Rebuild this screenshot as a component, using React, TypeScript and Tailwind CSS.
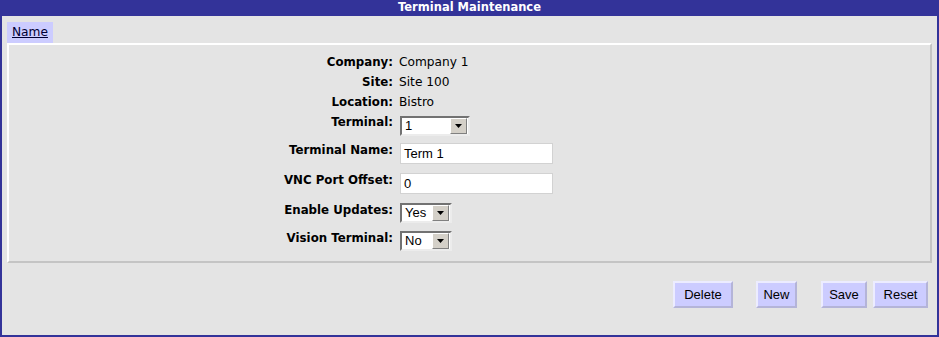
const rows = [
  { label: "Company:", value: "Company 1" },
  { label: "Site:", value: "Site 100" },
  { label: "Location:", value: "Bistro" },
];

function DropArrow() {
  return (
    <div className="ml-auto mr-px flex h-[16px] w-[17px] items-center justify-center border border-t-white border-l-white border-r-[#808080] border-b-[#808080] bg-[#d4d0c8]">
      <svg width="7" height="4" viewBox="0 0 7 4">
        <path d="M0 0h7L3.5 4z" fill="#000" />
      </svg>
    </div>
  );
}

function FakeSelect({ value, className }: { value: string; className: string }) {
  return (
    <div
      className={`${className} flex h-[20px] items-center border-2 border-t-[#727272] border-l-[#727272] border-r-[#ececec] border-b-[#ececec] bg-white pl-[3px] font-['Liberation_Sans',Arial,sans-serif] text-[13px] text-black`}>
      <span>{value}</span>
      <DropArrow />
    </div>
  );
}

function TextBox({ value }: { value: string }) {
  return (
    <div className="flex h-[21px] w-[153px] items-center border border-[#d2d2d2] bg-white pl-[3px] font-['Liberation_Sans',Arial,sans-serif] text-[13px] text-black">
      {value}
    </div>
  );
}

function Label({ children }: { children: string }) {
  return (
    <div className="w-[384px] shrink-0 text-right text-[11.8px] leading-[20px] font-bold text-black">
      {children}
    </div>
  );
}

export default function App() {
  return (
    <div className="h-[337px] w-[939px] border-2 border-[#333399] bg-[#e4e4e4] font-['DejaVu_Sans',Verdana,sans-serif]">
      <div className="-mt-[2px] flex h-[16px] items-center justify-center bg-[#333399] text-[11.5px] font-bold text-white">
        Terminal Maintenance
      </div>

      <div className="px-[5px] pt-[6px]">
        <div className="flex">
          <div className="flex h-[21px] items-center bg-[#ccccff] px-[5px] text-[12.2px] text-[#000033] underline">
            Name
          </div>
        </div>

        <div className="border-2 border-t-white border-l-white border-r-[#c4c4c4] border-b-[#c4c4c4] pt-[7px] pb-[5px]">
          {rows.map((row) => (
            <div key={row.label} className="flex h-[20px]">
              <Label>{row.label}</Label>
              <div className="ml-[6px] text-[12.2px] leading-[20px] text-black">{row.value}</div>
            </div>
          ))}

          <div className="flex h-[28px]">
            <Label>Terminal:</Label>
            <div className="ml-[7px] mt-[4px]">
              <FakeSelect value="1" className="w-[70px]" />
            </div>
          </div>

          <div className="flex h-[30px]">
            <Label>Terminal Name:</Label>
            <div className="ml-[7px] mt-[3px]">
              <TextBox value="Term 1" />
            </div>
          </div>

          <div className="flex h-[30px]">
            <Label>VNC Port Offset:</Label>
            <div className="ml-[7px] mt-[3px]">
              <TextBox value="0" />
            </div>
          </div>

          <div className="flex h-[28px]">
            <Label>Enable Updates:</Label>
            <div className="ml-[7px] mt-[3px]">
              <FakeSelect value="Yes" className="w-[52px]" />
            </div>
          </div>

          <div className="flex h-[28px]">
            <Label>Vision Terminal:</Label>
            <div className="ml-[7px] mt-[3px]">
              <FakeSelect value="No" className="w-[52px]" />
            </div>
          </div>
        </div>

        <div className="mt-[18px] flex justify-end pr-[4px] font-['Liberation_Sans',Arial,sans-serif] text-[13px] text-black">
          <button className="h-[27px] w-[60px] border-2 border-t-[#ececff] border-l-[#ececff] border-r-[#b4b4d8] border-b-[#b4b4d8] bg-[#ccccff]">
            Delete
          </button>
          <button className="ml-[23px] h-[27px] w-[41px] border-2 border-t-[#ececff] border-l-[#ececff] border-r-[#b4b4d8] border-b-[#b4b4d8] bg-[#ccccff]">
            New
          </button>
          <button className="ml-[24px] h-[27px] w-[46px] border-2 border-t-[#ececff] border-l-[#ececff] border-r-[#b4b4d8] border-b-[#b4b4d8] bg-[#ccccff]">
            Save
          </button>
          <button className="ml-[6px] h-[27px] w-[55px] border-2 border-t-[#ececff] border-l-[#ececff] border-r-[#b4b4d8] border-b-[#b4b4d8] bg-[#ccccff]">
            Reset
          </button>
        </div>
      </div>
    </div>
  );
}
